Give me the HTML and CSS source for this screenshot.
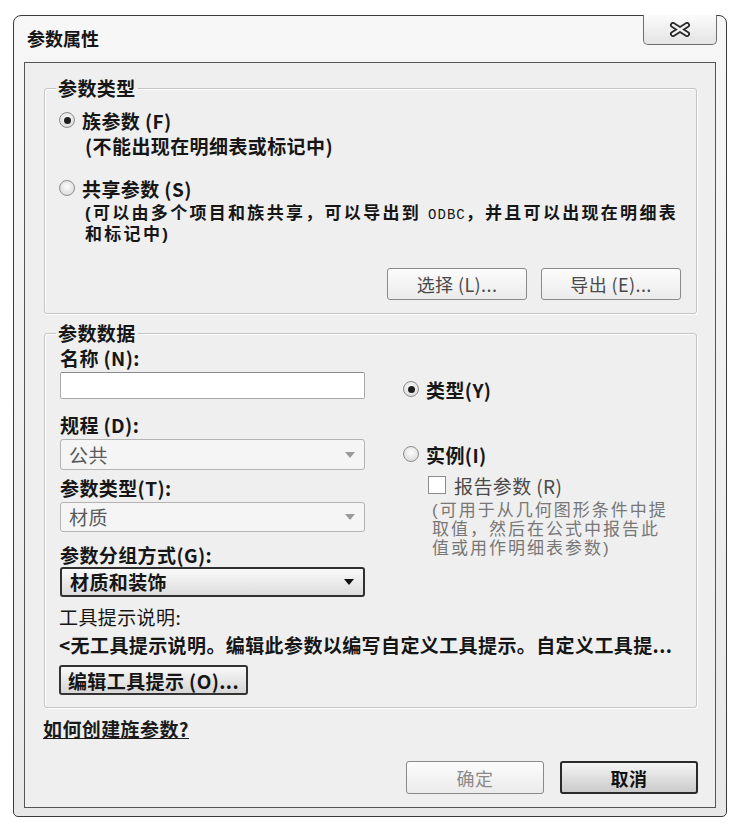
FILE: index.html
```html
<!DOCTYPE html>
<html lang="zh-CN">
<head>
    <meta charset="UTF-8">
    <meta name="viewport" content="width=device-width, initial-scale=1.0">
    <link rel="stylesheet" href="styles.css">
</head>
<body>
    <div class="window">
        <div class="titlebar">
            <span class="title">参数属性</span>
            <button class="close-button" aria-label="关闭">
                <svg width="24" height="15" viewBox="0 0 24 15">
                    <path d="M5 3 L19 12 M19 3 L5 12" stroke="#2b2b2b" stroke-width="6" stroke-linecap="round" fill="none"/>
                    <path d="M5 3 L19 12 M19 3 L5 12" stroke="#f4f4f4" stroke-width="2.4" stroke-linecap="round" fill="none"/>
                </svg>
            </button>
        </div>

        <div class="client">
            <div class="group">
                <div class="group-title">参数类型</div>
                <div class="option">
                    <span class="radio checked"></span>
                    <span>族参数 (F)</span>
                </div>
                <div class="option-note">(不能出现在明细表或标记中)</div>
                <div class="option option-shared">
                    <span class="radio"></span>
                    <span>共享参数 (S)</span>
                </div>
                <div class="option-note note-shared">(可以由多个项目和族共享，可以导出到 <span class="latin">ODBC</span>，并且可以出现在明细表<br>和标记中)</div>
                <div class="group-buttons">
                    <button class="button">选择 (L)...</button>
                    <button class="button">导出 (E)...</button>
                </div>
            </div>

            <div class="group group-data">
                <div class="group-title">参数数据</div>
                <div class="data-main">
                    <div class="data-left">
                        <div class="field-label first">名称 (N):</div>
                        <div class="text-input"></div>

                        <div class="field-label label-discipline">规程 (D):</div>
                        <div class="select disabled select-discipline">
                            <span>公共</span><span class="arrow"></span>
                        </div>

                        <div class="field-label label-type">参数类型(T):</div>
                        <div class="select disabled">
                            <span>材质</span><span class="arrow"></span>
                        </div>

                        <div class="field-label label-group">参数分组方式(G):</div>
                        <div class="select active">
                            <span>材质和装饰</span><span class="arrow"></span>
                        </div>
                    </div>

                    <div class="data-right">
                        <div class="option option-type">
                            <span class="radio checked"></span>
                            <span>类型(Y)</span>
                        </div>
                        <div class="option option-instance">
                            <span class="radio"></span>
                            <span>实例(I)</span>
                        </div>
                        <div class="check-row">
                            <span class="checkbox"></span>
                            <span>报告参数 (R)</span>
                        </div>
                        <div class="report-note">
                            <div>(可用于从几何图形条件中提</div>
                            <div>取值，然后在公式中报告此</div>
                            <div>值或用作明细表参数)</div>
                        </div>
                    </div>
                </div>

                <div class="tooltip-label">工具提示说明:</div>
                <div class="tooltip-text">&lt;无工具提示说明。编辑此参数以编写自定义工具提示。自定义工具提...</div>
                <button class="button edit-button">编辑工具提示 (O)...</button>
            </div>

            <a class="help-link" href="#">如何创建旌参数?</a>

            <div class="dialog-buttons">
                <button class="button ok-button">确定</button>
                <button class="button cancel-button">取消</button>
            </div>
        </div>
    </div>
</body>
</html>
```

FILE: styles.css
```css
body {
    margin: 0;
    background: #fff;
    font-family: "Noto Sans CJK SC", "Noto Sans", sans-serif;
    font-size: 19px;
    letter-spacing: 0.4px;
    color: #161616;
}

.window {
    box-sizing: border-box;
    width: 714px;
    height: 802px;
    margin: 15px 0 0 13px;
    padding: 0 10px 10px 10px;
    border: 1px solid #3a3a3a;
    border-radius: 8px 8px 5px 5px;
    background: linear-gradient(to bottom, #f7f7f7, #e8e8e8);
    display: flex;
    flex-direction: column;
}

.titlebar {
    height: 46px;
    flex-shrink: 0;
    display: flex;
    justify-content: space-between;
    align-items: flex-start;
}

.title {
    margin: 11px 0 0 3px;
    font-size: 18px;
    font-weight: 700;
    line-height: 22px;
    letter-spacing: 0;
}

.close-button {
    width: 74px;
    height: 30px;
    margin: -1px -1px 0 0;
    padding: 0;
    border: 1px solid #6e6e6e;
    border-top: none;
    border-radius: 0 0 5px 5px;
    background: linear-gradient(to bottom, #fbfbfb, #e4e4e4);
    display: flex;
    align-items: center;
    justify-content: center;
}

.client {
    flex: 1;
    box-sizing: border-box;
    border: 1px solid #555;
    background: #efefef;
    padding: 25px 18px 13px 19px;
    display: flex;
    flex-direction: column;
}

/* group boxes */
.group {
    border: 1px solid #c4c4c4;
    border-radius: 3px;
    box-shadow: inset 1px 1px 0 #fff, 1px 1px 0 #fff;
    padding: 0 14px 13px 14px;
}

.group-title {
    width: fit-content;
    margin: -11px 0 0 -3px;
    padding: 0 2px;
    background: #efefef;
    line-height: 20px;
    font-weight: 700;
}

.option {
    display: flex;
    align-items: center;
    gap: 7px;
    height: 22px;
    margin-top: 11px;
    font-weight: 700;
    white-space: nowrap;
}

.option-note {
    margin-top: 5px;
    padding-left: 26px;
    line-height: 20px;
    font-weight: 700;
    white-space: nowrap;
}

.option-shared {
    margin-top: 21px;
}

/* tight multi-line notes: Latin primary font keeps the line boxes short */
.note-shared,
.report-note {
    font-family: "Liberation Sans", "Noto Sans CJK SC", sans-serif;
    font-size: 17px;
    line-height: 19px;
}

.note-shared {
    margin-top: 5px;
    letter-spacing: 2.3px;
}

.latin {
    font-family: "Liberation Mono", monospace;
    font-size: 14px;
    font-weight: 400;
    letter-spacing: 1px;
}

.radio {
    box-sizing: border-box;
    width: 16px;
    height: 16px;
    flex-shrink: 0;
    border: 1px solid #8c8c8c;
    border-radius: 50%;
    background: radial-gradient(circle at 50% 40%, #fdfdfd, #d2d2d2);
    display: flex;
    align-items: center;
    justify-content: center;
}

.radio.checked::after {
    content: "";
    width: 7px;
    height: 7px;
    border-radius: 50%;
    background: #1e1e1e;
}

.group-buttons {
    display: flex;
    justify-content: flex-end;
    gap: 14px;
    margin: 24px 1px 0 0;
}

.button {
    box-sizing: border-box;
    width: 140px;
    height: 32px;
    padding: 0;
    border: 1px solid #8a8a8a;
    border-radius: 3px;
    background: linear-gradient(to bottom, #fcfcfc, #ebebeb);
    font-family: inherit;
    font-size: 18px;
    letter-spacing: 0.4px;
    color: #4a4a4a;
}

/* parameter data */
.group-data {
    margin-top: 19px;
    padding-bottom: 12px;
}

.data-main {
    display: flex;
    gap: 38px;
}

.data-left {
    width: 305px;
    margin-left: 1px;
}

.field-label {
    line-height: 20px;
    font-weight: 700;
    white-space: nowrap;
}

.field-label.first {
    margin-top: 5px;
}

.label-discipline {
    margin-top: 16px;
}

.label-type {
    margin-top: 8px;
}

.label-group {
    margin-top: 13px;
}

.text-input {
    box-sizing: border-box;
    height: 27px;
    margin-top: 4px;
    border: 1px solid #a9a9a9;
    border-top-color: #8a8a8a;
    border-radius: 2px;
    background: #fff;
}

.select {
    box-sizing: border-box;
    height: 30px;
    margin-top: 4px;
    padding: 0 9px 0 8px;
    border-radius: 3px;
    display: flex;
    align-items: center;
    justify-content: space-between;
    line-height: 20px;
}

.select.disabled {
    border: 1px solid #b3b3b3;
    background: #f5f5f5;
    color: #5a5a5a;
}

.select-discipline {
    height: 31px;
}

.select.active {
    margin-top: 2px;
    border: 2px solid #303030;
    background: linear-gradient(to bottom, #fafafa, #dcdcdc);
    font-weight: 700;
}

.arrow {
    width: 0;
    height: 0;
    border-left: 5px solid transparent;
    border-right: 5px solid transparent;
    border-top: 6px solid #9a9a9a;
}

.select.active .arrow {
    border-top-color: #111;
}

.data-right {
    flex: 1;
}

.option-type {
    margin-top: 35px;
}

.option-instance {
    margin-top: 43px;
}

.check-row {
    display: flex;
    align-items: center;
    gap: 8px;
    height: 22px;
    margin-top: 9px;
    padding-left: 25px;
    color: #4a4a4a;
    white-space: nowrap;
}

.checkbox {
    box-sizing: border-box;
    width: 18px;
    height: 18px;
    border: 1px solid #8c8c8c;
    background: #fff;
}

.report-note {
    margin-top: 5px;
    padding-left: 29px;
    letter-spacing: 2px;
    color: #777;
    white-space: nowrap;
}

.tooltip-label {
    margin-top: 10px;
    line-height: 20px;
}

.tooltip-text {
    margin-top: 8px;
    line-height: 20px;
    font-weight: 700;
    white-space: nowrap;
}

.edit-button {
    display: block;
    width: 189px;
    height: 30px;
    margin-top: 10px;
    border: 2px solid #333;
    background: linear-gradient(to bottom, #f8f8f8, #d6d6d6);
    color: #151515;
    font-size: 19px;
    font-weight: 700;
}

.help-link {
    align-self: flex-start;
    margin: 11px 0 0 -1px;
    line-height: 20px;
    color: #1a1a1a;
    font-weight: 700;
    text-decoration: underline;
}

.dialog-buttons {
    display: flex;
    justify-content: flex-end;
    gap: 16px;
    margin: 22px -1px 0 0;
}

.dialog-buttons .button {
    width: 138px;
    height: 33px;
}

.ok-button {
    color: #8a8a8a;
}

.cancel-button {
    border: 2px solid #2a2a2a;
    background: linear-gradient(to bottom, #f4f4f4, #cbcbcb);
    color: #111;
    font-weight: 700;
}
```
